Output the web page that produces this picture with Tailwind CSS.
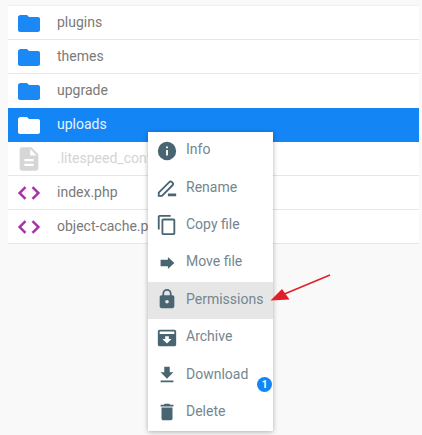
<!DOCTYPE html>
<html lang="en">
<head>
  <meta charset="UTF-8">
  <title>File manager</title>
  <script src="https://cdn.jsdelivr.net/npm/@tailwindcss/browser@4"></script>
</head>
<body class="bg-[#f9f9f9] font-['Roboto',sans-serif] w-[422px] h-[435px] overflow-hidden relative">
  <!-- File list -->
  <ul class="ml-[8px] mr-[3px] mt-[5px] border-t border-[#f1f1f1] text-[14px] text-[#7a7a7a]">
    <li class="h-[34px] flex items-center bg-white border-b border-[#e6e6e6]">
      <svg class="w-[24px] h-[24px] ml-[9px] text-[#1a88f5]" viewBox="0 0 24 24" fill="currentColor"><path d="M10 4H3.500C2.400 4 1 5 1 6v13c0 1.100.9 2 2 2h18c1.100 0 2-.9 2-2V8c0-1.100-.9-2-2-2h-9z"/></svg>
      <span class="ml-[16px]">plugins</span>
    </li>
    <li class="h-[34px] flex items-center bg-white border-b border-[#e6e6e6]">
      <svg class="w-[24px] h-[24px] ml-[9px] text-[#1a88f5]" viewBox="0 0 24 24" fill="currentColor"><path d="M10 4H3.500C2.400 4 1 5 1 6v13c0 1.100.9 2 2 2h18c1.100 0 2-.9 2-2V8c0-1.100-.9-2-2-2h-9z"/></svg>
      <span class="ml-[16px]">themes</span>
    </li>
    <li class="h-[34px] flex items-center bg-white border-b border-white">
      <svg class="w-[24px] h-[24px] ml-[9px] text-[#1a88f5]" viewBox="0 0 24 24" fill="currentColor"><path d="M10 4H3.500C2.400 4 1 5 1 6v13c0 1.100.9 2 2 2h18c1.100 0 2-.9 2-2V8c0-1.100-.9-2-2-2h-9z"/></svg>
      <span class="ml-[16px]">upgrade</span>
    </li>
    <li class="h-[34px] flex items-center bg-[#1485f5] border-b border-[#1485f5] text-[#e8f3ff]">
      <svg class="w-[24px] h-[24px] ml-[9px] text-white" viewBox="0 0 24 24" fill="currentColor"><path d="M10 4H3.500C2.400 4 1 5 1 6v13c0 1.100.9 2 2 2h18c1.100 0 2-.9 2-2V8c0-1.100-.9-2-2-2h-9z"/></svg>
      <span class="ml-[16px]">uploads</span>
    </li>
    <li class="h-[34px] flex items-center bg-white border-b border-[#e6e6e6] text-[#d4d4d4]">
      <svg class="w-[28px] h-[28px] ml-[7px] text-[#d6d6d6]" viewBox="0 0 24 24" fill="currentColor"><path d="M14 2H6c-1.100 0-2 .9-2 2v16c0 1.100.9 2 2 2h12c1.100 0 2-.9 2-2V8l-6-6zm2 16H8v-2h8v2zm0-4H8v-2h8v2zm-3-5V3.500L18.500 9H13z"/></svg>
      <span class="ml-[14px]">.litespeed_conf.dat</span>
    </li>
    <li class="h-[34px] flex items-center bg-white border-b border-[#e6e6e6]">
      <svg class="w-[24px] h-[24px] ml-[9px] text-[#a82fa8]" viewBox="1 1 22 22" fill="currentColor" stroke="currentColor" stroke-width="0.4"><path d="M9.400 16.600 4.800 12l4.600-4.600L8 6l-6 6 6 6 1.400-1.400zm5.200 0 4.600-4.600-4.600-4.600L16 6l6 6-6 6-1.400-1.400z"/></svg>
      <span class="ml-[16px]">index.php</span>
    </li>
    <li class="h-[34px] flex items-center bg-white border-b border-[#e6e6e6]">
      <svg class="w-[24px] h-[24px] ml-[9px] text-[#a82fa8]" viewBox="1 1 22 22" fill="currentColor" stroke="currentColor" stroke-width="0.4"><path d="M9.400 16.600 4.800 12l4.600-4.600L8 6l-6 6 6 6 1.400-1.400zm5.200 0 4.600-4.600-4.600-4.600L16 6l6 6-6 6-1.400-1.400z"/></svg>
      <span class="ml-[16px]">object-cache.php</span>
    </li>
  </ul>

  <!-- Context menu -->
  <div class="absolute left-[148px] top-[132px] w-[125px] bg-white shadow-[0_1px_5px_rgba(0,0,0,0.3)] text-[14px] text-[#74868f]">
    <div class="h-[37.4px] flex items-center">
      <svg class="w-[22px] h-[22px] ml-[8px] text-[#4a6572]" viewBox="0 0 24 24" fill="currentColor"><path d="M12 2a10 10 0 1 0 0 20 10 10 0 0 0 0-20zm1 15h-2v-6h2v6zm0-8h-2V7h2v2z"/></svg>
      <span class="ml-[8px] mb-[2px]">Info</span>
    </div>
    <div class="h-[37.4px] flex items-center">
      <svg class="w-[22px] h-[22px] ml-[8px] text-[#4a6572]" viewBox="0 0 24 24" fill="none" stroke="currentColor" stroke-width="2"><path d="M3 20.500v-3.500L14.500 5.500a2 2 0 0 1 2.800 0l.7.7a2 2 0 0 1 0 2.800L6.500 20.500H3z"/><path d="M13 19.500h9" stroke-width="3"/></svg>
      <span class="ml-[8px] mb-[2px]">Rename</span>
    </div>
    <div class="h-[37.4px] flex items-center">
      <svg class="w-[22px] h-[22px] ml-[8px] text-[#4a6572]" viewBox="0 0 24 24" fill="currentColor"><path d="M16 1H4c-1.100 0-2 .9-2 2v14h2V3h12V1zm3 4H8c-1.100 0-2 .9-2 2v14c0 1.100.9 2 2 2h11c1.100 0 2-.9 2-2V7c0-1.100-.9-2-2-2zm0 16H8V7h11v14z"/></svg>
      <span class="ml-[8px] mb-[2px]">Copy file</span>
    </div>
    <div class="h-[37.4px] flex items-center">
      <svg class="w-[22px] h-[22px] ml-[8px] text-[#4a6572]" viewBox="0 0 24 24" fill="currentColor"><path d="M5 8.500h8V5.500l7 6.500-7 6.500v-3H5z"/></svg>
      <span class="ml-[8px] mb-[2px]">Move file</span>
    </div>
    <div class="h-[37.4px] flex items-center bg-[#e6e6e6]">
      <svg class="w-[22px] h-[22px] ml-[8px] mb-[2px] text-[#4a6572]" viewBox="0 0 24 24" fill="currentColor"><path d="M18 8h-1V6A5 5 0 0 0 7 6v2H6c-1.100 0-2 .9-2 2v10c0 1.100.9 2 2 2h12c1.100 0 2-.9 2-2V10c0-1.100-.9-2-2-2zm-6 9a2 2 0 1 1 0-4 2 2 0 0 1 0 4zm3.100-9H8.900V6a3.100 3.100 0 0 1 6.200 0v2z"/></svg>
      <span class="ml-[8px] mb-[2px]">Permissions</span>
    </div>
    <div class="h-[37.4px] flex items-center">
      <svg class="w-[22px] h-[22px] ml-[8px] text-[#4a6572]" viewBox="0 0 24 24" fill="currentColor"><path d="M20 3H4c-1.100 0-2 .9-2 2v14c0 1.100.9 2 2 2h16c1.100 0 2-.9 2-2V5c0-1.100-.9-2-2-2zm0 4.500H4V5h16v2.500zM12 18l-5-5h3v-3h4v3h3l-5 5z"/></svg>
      <span class="ml-[8px] mb-[2px]">Archive</span>
    </div>
    <div class="h-[37.4px] flex items-center">
      <svg class="w-[22px] h-[22px] ml-[8px] text-[#4a6572]" viewBox="0 0 24 24" fill="currentColor"><path d="M19 9h-4V3H9v6H5l7 7 7-7zM5 18v2h14v-2H5z"/></svg>
      <span class="ml-[8px] mb-[2px]">Download</span>
    </div>
    <div class="h-[37.4px] flex items-center">
      <svg class="w-[22px] h-[22px] ml-[8px] text-[#4a6572]" viewBox="0 0 24 24" fill="currentColor"><path d="M6 19c0 1.100.9 2 2 2h8c1.100 0 2-.9 2-2V7H6v12zM19 4h-3.500l-1-1h-5l-1 1H5v2h14V4z"/></svg>
      <span class="ml-[8px] mb-[2px]">Delete</span>
    </div>
    <span class="absolute left-[109px] top-[245px] w-[15px] h-[15px] rounded-full bg-[#1485f5] text-white text-[10px] font-bold flex items-center justify-center">1</span>
  </div>

  <!-- Annotation arrow -->
  <svg class="absolute left-[270px] top-[270px]" width="64" height="34" viewBox="0 0 64 34" fill="none">
    <path d="M60 5 12 25" stroke="#e11f26" stroke-width="1.500"/>
    <path d="M0.500 30.500 12 19 19.500 29.500z" fill="#e11f26"/>
  </svg>
</body>
</html>
